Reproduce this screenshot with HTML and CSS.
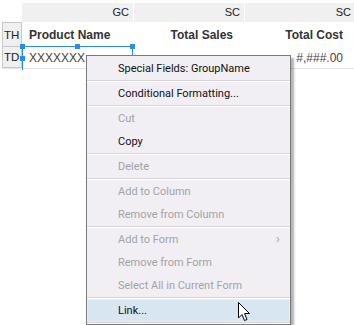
FILE: index.html
```html
<!DOCTYPE html>
<html lang="en">
<head>
  <meta charset="UTF-8" />
  <title>Report Designer</title>
  <link rel="stylesheet" href="styles.css">
</head>
<body>

  <div class="sheet">
    <div class="group-row">
      <div class="group-cell">GC</div>
      <div class="group-cell">SC</div>
      <div class="group-cell">SC</div>
    </div>

    <div class="row head">
      <div class="tag">TH</div>
      <div class="cell name">Product Name</div>
      <div class="cell">Total Sales</div>
      <div class="cell">Total Cost</div>
    </div>

    <div class="row body">
      <div class="tag">TD</div>
      <div class="cell name">
        XXXXXXX
        <div class="selection">
          <span class="handle h1"></span>
          <span class="handle h2"></span>
          <span class="handle h3"></span>
          <span class="handle h4"></span>
        </div>
      </div>
      <div class="cell"></div>
      <div class="cell">#,###.00</div>
    </div>
  </div>

  <!-- Context menu -->
  <ul class="menu">
    <li>Special Fields: GroupName</li>
    <li class="sep"></li>
    <li>Conditional Formatting...</li>
    <li class="sep"></li>
    <li class="off">Cut</li>
    <li>Copy</li>
    <li class="sep"></li>
    <li class="off">Delete</li>
    <li class="sep"></li>
    <li class="off">Add to Column</li>
    <li class="off">Remove from Column</li>
    <li class="sep"></li>
    <li class="off sub">Add to Form</li>
    <li class="off">Remove from Form</li>
    <li class="off">Select All in Current Form</li>
    <li class="sep"></li>
    <li class="hover">Link...</li>
    <li class="sep"></li>
  </ul>

  <svg class="cursor" width="13" height="20" viewBox="0 0 13 20">
    <path d="M0.5 0.5 L0.5 16 L4 12.5 L6.5 18.5 L9 17.5 L6.5 11.5 L11.5 11.5 Z" fill="#fff" stroke="#000" stroke-width="1"/>
  </svg>

</body>
</html>
```

FILE: styles.css
```css
body {
  margin: 0;
  background: #fff;
  font-family: "Liberation Sans", Arial, sans-serif;
  font-size: 12px;
  color: #222;
  position: relative;
  height: 325px;
  overflow: hidden;
}

.sheet {
  padding-top: 3px;
}

.group-row {
  display: flex;
  margin-left: 22px;
  gap: 1px;
  height: 19px;
}

.group-cell {
  background: #f0f0f0;
  flex: 0 0 110px;
  text-align: right;
  padding-right: 4px;
  box-sizing: border-box;
  line-height: 19px;
  font-size: 11px;
  color: #222;
}

.group-cell:first-child {
  flex-basis: 111px;
}

.row {
  display: flex;
  border-bottom: 1px solid #e4e4e4;
  margin-left: 2px;
}

.row.head {
  height: 25px;
  border-bottom: none;
}

.row.body {
  height: 21px;
}

.tag {
  width: 20px;
  box-sizing: border-box;
  background: #f0f0f0;
  border: 1px solid #c8c8c8;
  border-top: none;
  font-size: 11.5px;
  padding-left: 1px;
  display: flex;
  align-items: center;
}

.row.head .tag {
  border-top: 1px solid #c8c8c8;
}

.cell {
  flex: 0 0 110px;
  text-align: right;
  padding-right: 9px;
  box-sizing: border-box;
  display: flex;
  align-items: center;
  justify-content: flex-end;
}

.cell.name {
  justify-content: flex-start;
  padding-left: 7px;
  position: relative;
}

.head .cell {
  font-weight: bold;
  font-size: 12px;
  color: #333;
}

.body .cell {
  color: #444;
}

.selection {
  position: absolute;
  left: 0;
  top: -1px;
  width: 109px;
  height: 23px;
  border-top: 1px solid #2b8de3;
  border-left: 1px solid #2b8de3;
  border-right: 1px solid #2b8de3;
}

.handle {
  position: absolute;
  width: 5px;
  height: 5px;
  background: #2b8de3;
}

.h1 { left: -3px; top: -3px; }
.h2 { left: 52px; top: -3px; }
.h3 { right: -3px; top: -3px; }
.h4 { left: -3px; top: 9px; }

/* Context menu */
.menu {
  position: absolute;
  left: 86px;
  top: 55px;
  width: 203px;
  margin: 0;
  padding: 1px 0 0;
  list-style: none;
  background: #f1eff3;
  border: 1px solid #7a7a7a;
  box-shadow: 3px 3px 2px rgba(0, 0, 0, 0.3);
  font-family: Roboto, "Liberation Sans", sans-serif;
  font-size: 11px;
  color: #111;
}

.menu li {
  height: 23px;
  line-height: 23px;
  padding-left: 31px;
  position: relative;
}

.menu li.sep {
  height: 1px;
  padding: 0;
  background: #d6d4d8;
  border-bottom: 1px solid #fff;
}

.menu li.off {
  color: #a3a3a3;
}

.menu li.sub::after {
  content: "›";
  position: absolute;
  right: 10px;
  top: -1px;
  font-size: 13px;
  color: #a3a3a3;
}

.menu li.hover {
  background: #d8e6f2;
  box-shadow: inset 0 0 0 1px #e4eef7;
}

.cursor {
  position: absolute;
  left: 238px;
  top: 302px;
}
```
